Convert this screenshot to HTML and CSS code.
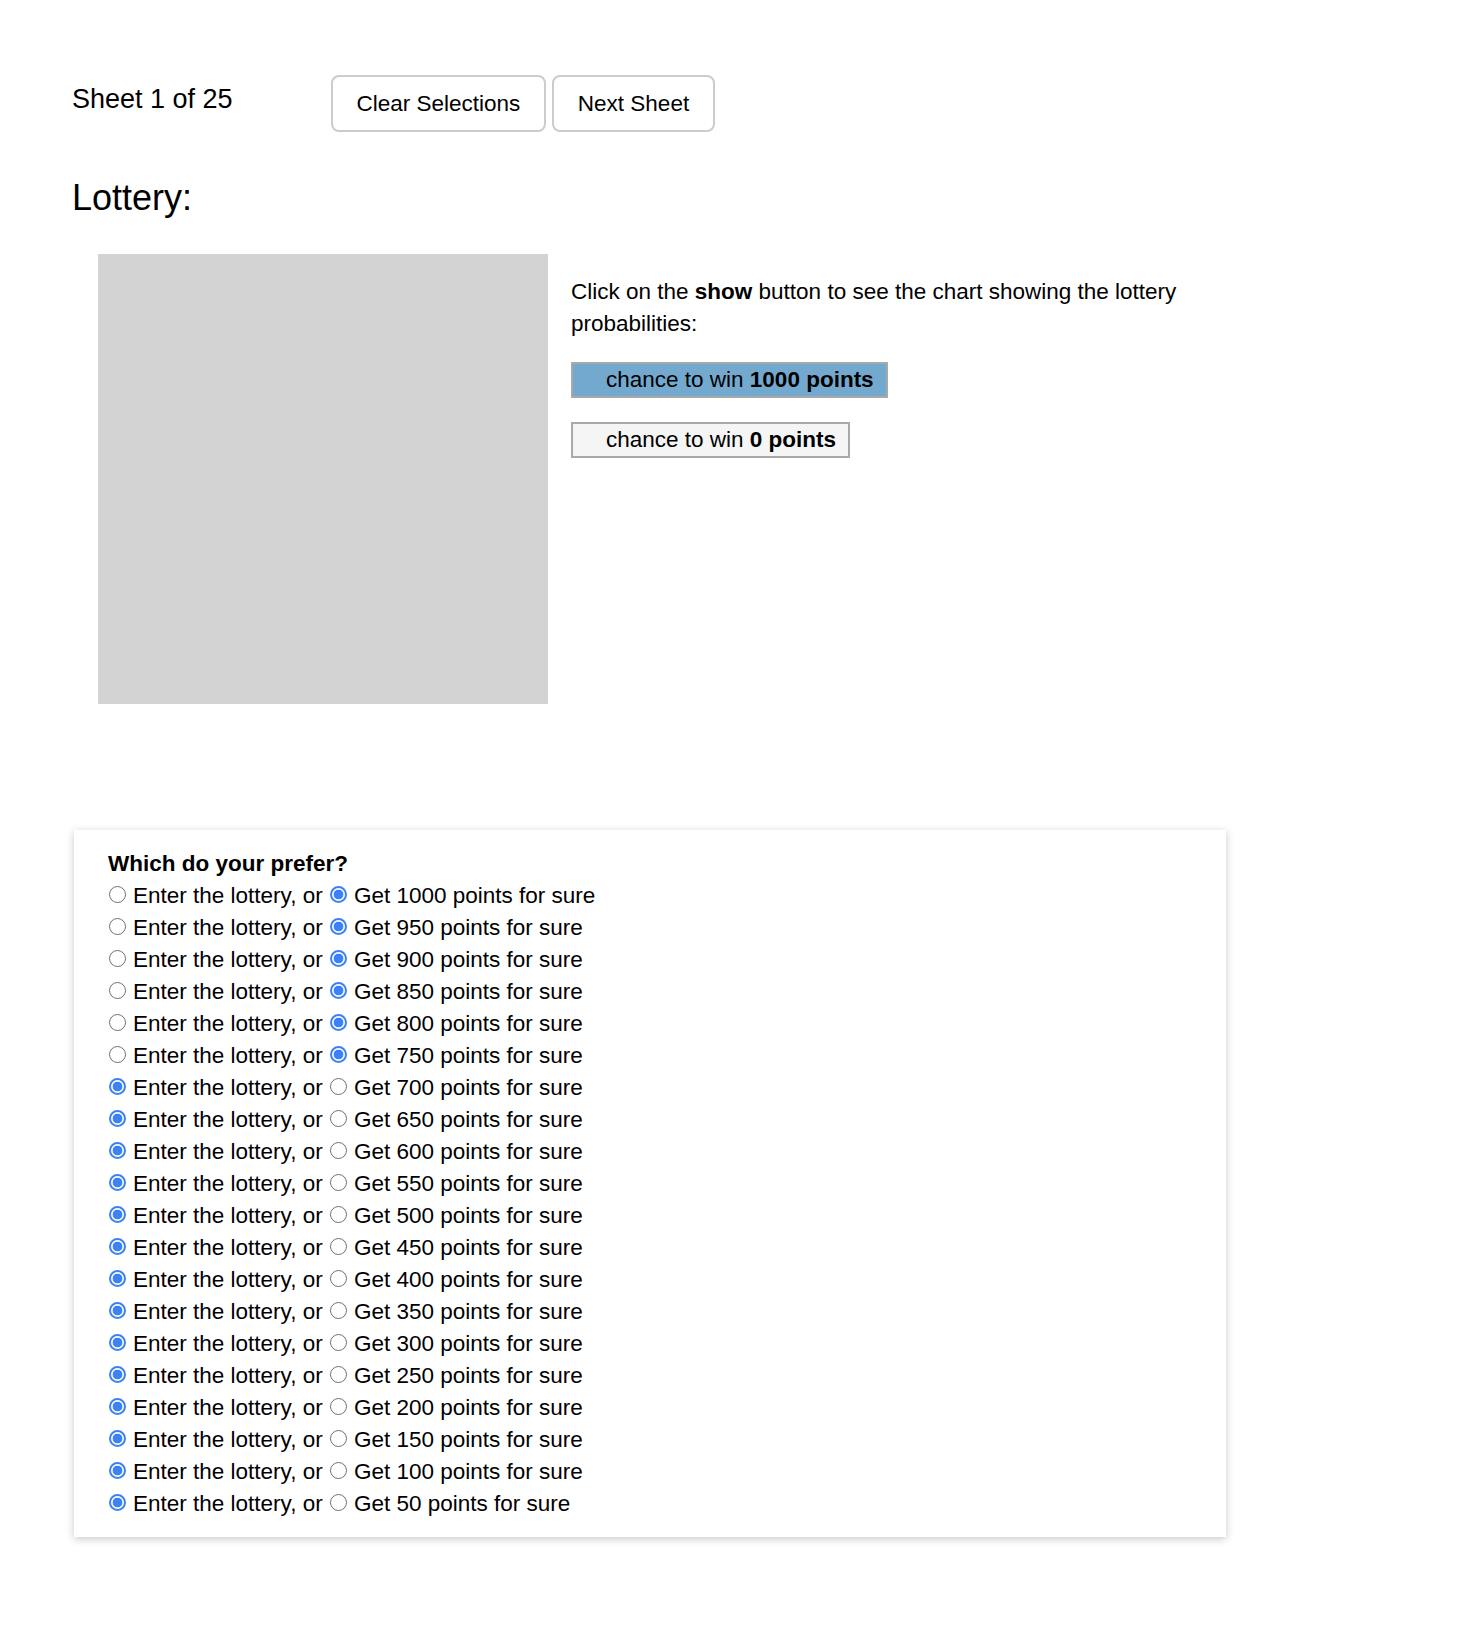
FILE: index.html
```html
<!DOCTYPE html>
<html lang="en">
<head>
<meta charset="utf-8">
<title>Lottery</title>
<link rel="stylesheet" href="styles.css">
</head>
<body>
<div class="page">
  <div class="topbar">
    <div class="sheet">Sheet 1 of 25</div>
    <div class="actions">
      <button class="btn">Clear Selections</button>
      <button class="btn">Next Sheet</button>
    </div>
  </div>
  <h1 class="title">Lottery:</h1>
  <div class="lottery">
    <div class="chart"></div>
    <div class="info">
      <p class="desc">Click on the <b>show</b> button to see the chart showing the lottery probabilities:</p>
      <div class="bar bar-win">chance to win <b>1000 points</b></div>
      <div class="bar bar-lose">chance to win <b>0 points</b></div>
    </div>
  </div>
  <div class="panel">
    <div class="question">Which do your prefer?</div>
    <div class="row"><label class="choice"><input type="radio" class="radio" name="q1">Enter the lottery, or</label> <label class="choice"><input type="radio" class="radio" name="q1" checked>Get 1000 points for sure</label></div>
    <div class="row"><label class="choice"><input type="radio" class="radio" name="q2">Enter the lottery, or</label> <label class="choice"><input type="radio" class="radio" name="q2" checked>Get 950 points for sure</label></div>
    <div class="row"><label class="choice"><input type="radio" class="radio" name="q3">Enter the lottery, or</label> <label class="choice"><input type="radio" class="radio" name="q3" checked>Get 900 points for sure</label></div>
    <div class="row"><label class="choice"><input type="radio" class="radio" name="q4">Enter the lottery, or</label> <label class="choice"><input type="radio" class="radio" name="q4" checked>Get 850 points for sure</label></div>
    <div class="row"><label class="choice"><input type="radio" class="radio" name="q5">Enter the lottery, or</label> <label class="choice"><input type="radio" class="radio" name="q5" checked>Get 800 points for sure</label></div>
    <div class="row"><label class="choice"><input type="radio" class="radio" name="q6">Enter the lottery, or</label> <label class="choice"><input type="radio" class="radio" name="q6" checked>Get 750 points for sure</label></div>
    <div class="row"><label class="choice"><input type="radio" class="radio" name="q7" checked>Enter the lottery, or</label> <label class="choice"><input type="radio" class="radio" name="q7">Get 700 points for sure</label></div>
    <div class="row"><label class="choice"><input type="radio" class="radio" name="q8" checked>Enter the lottery, or</label> <label class="choice"><input type="radio" class="radio" name="q8">Get 650 points for sure</label></div>
    <div class="row"><label class="choice"><input type="radio" class="radio" name="q9" checked>Enter the lottery, or</label> <label class="choice"><input type="radio" class="radio" name="q9">Get 600 points for sure</label></div>
    <div class="row"><label class="choice"><input type="radio" class="radio" name="q10" checked>Enter the lottery, or</label> <label class="choice"><input type="radio" class="radio" name="q10">Get 550 points for sure</label></div>
    <div class="row"><label class="choice"><input type="radio" class="radio" name="q11" checked>Enter the lottery, or</label> <label class="choice"><input type="radio" class="radio" name="q11">Get 500 points for sure</label></div>
    <div class="row"><label class="choice"><input type="radio" class="radio" name="q12" checked>Enter the lottery, or</label> <label class="choice"><input type="radio" class="radio" name="q12">Get 450 points for sure</label></div>
    <div class="row"><label class="choice"><input type="radio" class="radio" name="q13" checked>Enter the lottery, or</label> <label class="choice"><input type="radio" class="radio" name="q13">Get 400 points for sure</label></div>
    <div class="row"><label class="choice"><input type="radio" class="radio" name="q14" checked>Enter the lottery, or</label> <label class="choice"><input type="radio" class="radio" name="q14">Get 350 points for sure</label></div>
    <div class="row"><label class="choice"><input type="radio" class="radio" name="q15" checked>Enter the lottery, or</label> <label class="choice"><input type="radio" class="radio" name="q15">Get 300 points for sure</label></div>
    <div class="row"><label class="choice"><input type="radio" class="radio" name="q16" checked>Enter the lottery, or</label> <label class="choice"><input type="radio" class="radio" name="q16">Get 250 points for sure</label></div>
    <div class="row"><label class="choice"><input type="radio" class="radio" name="q17" checked>Enter the lottery, or</label> <label class="choice"><input type="radio" class="radio" name="q17">Get 200 points for sure</label></div>
    <div class="row"><label class="choice"><input type="radio" class="radio" name="q18" checked>Enter the lottery, or</label> <label class="choice"><input type="radio" class="radio" name="q18">Get 150 points for sure</label></div>
    <div class="row"><label class="choice"><input type="radio" class="radio" name="q19" checked>Enter the lottery, or</label> <label class="choice"><input type="radio" class="radio" name="q19">Get 100 points for sure</label></div>
    <div class="row"><label class="choice"><input type="radio" class="radio" name="q20" checked>Enter the lottery, or</label> <label class="choice"><input type="radio" class="radio" name="q20">Get 50 points for sure</label></div>
  </div>
</div>
</body>
</html>
```
FILE: styles.css
```css
html, body {
  margin: 0;
  padding: 0;
  background: #fff;
}
body {
  font-family: "Liberation Sans", Arial, Helvetica, sans-serif;
  color: #000;
}
.page {
  padding: 75px 0 101px 72px;
}
.topbar {
  display: flex;
  align-items: flex-start;
}
.sheet {
  width: 259px;
  font-size: 27px;
  line-height: 30px;
  margin-top: 9px;
}
.actions {
  display: flex;
  gap: 6.5px;
}
.btn {
  height: 57px;
  padding: 0 23.5px;
  font-family: inherit;
  font-size: 22.5px;
  color: #000;
  background: #fff;
  border: 2px solid #cccccc;
  border-radius: 8px;
}
.title {
  margin: 46px 0 0 0;
  font-size: 36px;
  line-height: 40px;
  font-weight: normal;
}
.lottery {
  display: flex;
  margin-top: 36px;
  margin-left: 26px;
}
.chart {
  width: 450px;
  height: 450px;
  background: #d3d3d3;
  flex: none;
}
.info {
  margin-left: 23px;
  width: 655px;
  font-size: 22.5px;
  line-height: 32px;
}
.desc {
  margin: 22px 0;
}
.bar {
  width: fit-content;
  border: 2px solid #a9a9a9;
  padding: 0 12px 0 33px;
  line-height: 32px;
}
.bar-win {
  background: #74a9cf;
  margin-bottom: 24px;
}
.bar-lose {
  background: #f5f5f5;
}
.panel {
  margin: 126px 0 0 2px;
  width: 1152px;
  box-sizing: border-box;
  padding: 18px 34px 17px;
  background: #fff;
  box-shadow: 0 2px 8px rgba(0, 0, 0, 0.22);
  font-size: 22.5px;
  line-height: 32px;
}
.question {
  font-weight: bold;
}
.row {
  white-space: nowrap;
}
.radio {
  appearance: none;
  -webkit-appearance: none;
  width: 17px;
  height: 17px;
  margin: 0 7px 0 1px;
  box-sizing: border-box;
  border: 1px solid #6f6f6f;
  border-radius: 50%;
  background: #fff;
  vertical-align: 0px;
}
.radio:checked {
  border: 2px solid #3b82f6;
  background: radial-gradient(circle, #3b82f6 0 4.6px, #fff 5.2px);
}
```
